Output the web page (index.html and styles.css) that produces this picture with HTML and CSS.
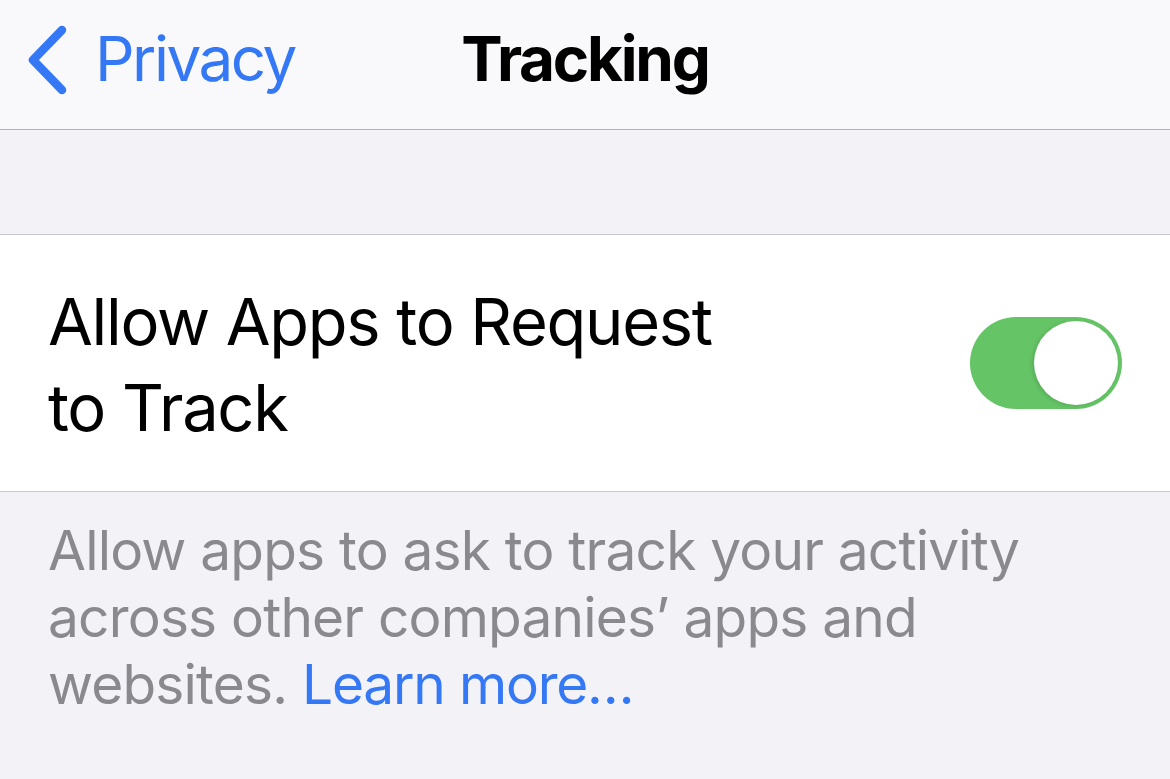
FILE: index.html
```html
<!DOCTYPE html>
<html>
<head>
<meta charset="utf-8">
<link rel="stylesheet" href="styles.css">
</head>
<body>
<div class="screen">
  <header class="nav">
    <div class="back">
      <svg class="chev" width="44" height="72" viewBox="0 0 44 72">
        <path d="M37 6 L8 36 L37 66" fill="none" stroke="#3478f6" stroke-width="8.5" stroke-linecap="round" stroke-linejoin="round"/>
      </svg>
      <span class="back-label">Privacy</span>
    </div>
    <div class="title">Tracking</div>
  </header>
  <div class="spacer"></div>
  <section class="cell">
    <div class="cell-label">Allow Apps to Request<br>to Track</div>
    <div class="toggle"><div class="knob"></div></div>
  </section>
  <div class="footer">
    <div class="fline">Allow apps to ask to track your activity</div>
    <div class="fline">across other companies’ apps and</div>
    <div class="fline"><span>websites.</span> <a class="link">Learn more…</a></div>
  </div>
</div>
</body>
</html>
```
FILE: styles.css
```css
html, body {
  margin: 0;
  padding: 0;
}
body {
  width: 1170px;
  height: 779px;
  overflow: hidden;
  background: #f2f2f7;
  font-family: Inter, "Liberation Sans", sans-serif;
}
.screen {
  display: flex;
  flex-direction: column;
  height: 779px;
}
.nav {
  height: 129px;
  background: #f9f9fb;
  border-bottom: 1px solid #b5b5b9;
  position: relative;
  display: flex;
  align-items: center;
  flex-shrink: 0;
}
.back {
  display: flex;
  align-items: center;
  padding-left: 25px;
  height: 100%;
}
.chev {
  display: block;
  margin-top: -10px;
}
.back-label {
  color: #3478f6;
  font-size: 62px;
  letter-spacing: -2.5px;
  margin-left: 26px;
  margin-top: -12px;
}
.title {
  position: absolute;
  left: 0;
  right: 0;
  top: 0;
  height: 129px;
  display: flex;
  align-items: center;
  justify-content: center;
  font-size: 62px;
  font-weight: 700;
  color: #000;
  letter-spacing: -2.25px;
  margin-top: -6px;
}
.spacer {
  height: 104px;
  flex-shrink: 0;
}
.cell {
  height: 256px;
  background: #fff;
  border-top: 1px solid #c8c8cc;
  border-bottom: 1px solid #c8c8cc;
  display: flex;
  align-items: center;
  justify-content: space-between;
  padding: 0 48px 0 48px;
  flex-shrink: 0;
}
.cell-label {
  font-size: 65px;
  line-height: 86px;
  color: #000;
  letter-spacing: -1.3px;
  margin-top: 4px;
}
.toggle {
  width: 152px;
  height: 92px;
  border-radius: 46px;
  background: #65c466;
  position: relative;
}
.knob {
  position: absolute;
  right: 4px;
  top: 4px;
  width: 84px;
  height: 84px;
  border-radius: 50%;
  background: #fff;
  box-shadow: -2px 1px 4px rgba(0,0,0,0.12);
}
.footer {
  padding: 25px 120px 0 48px;
  font-size: 55px;
  line-height: 67px;
  color: #8a8a8e;
  letter-spacing: -0.8px;
  white-space: nowrap;
}
.link {
  color: #3478f6;
  letter-spacing: -1.2px;
}
```
